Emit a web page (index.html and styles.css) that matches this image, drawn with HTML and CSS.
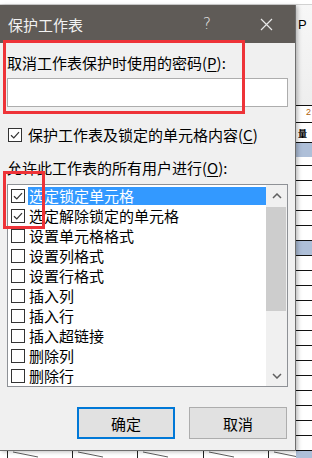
FILE: index.html
```html
<!DOCTYPE html>
<html lang="zh-CN">
<head>
    <meta charset="UTF-8">
    <title>保护工作表</title>
    <link rel="stylesheet" href="styles.css">
</head>
<body>
    <div class="screen">
        <div class="topline"></div>

        <!-- planilha atras do dialogo -->
        <div class="sheet">
            <div class="sheet-top"></div>
            <div class="colhead">P</div>
            <div class="srow r17"><span class="num">2</span></div>
            <div class="srow r20"><b class="glyph">量</b></div>
            <div class="srow sel"></div>
            <div class="srow r8"></div>
            <div class="srow"></div>
            <div class="srow"></div>
            <div class="srow"></div>
            <div class="srow"></div>
            <div class="srow"></div>
            <div class="srow sel"></div>
            <div class="srow"></div>
            <div class="srow"></div>
            <div class="srow"></div>
            <div class="srow"></div>
            <div class="srow"></div>
            <div class="srow"></div>
            <div class="srow"></div>
            <div class="srow"></div>
            <div class="srow"></div>
            <div class="srow"></div>
            <div class="srow"></div>
            <div class="srow"></div>
            <div class="srow"></div>
            <div class="srow sel"></div>
            <div class="srow"></div>
        </div>

        <div class="dialog">
            <div class="titlebar">
                <span class="title">保护工作表</span>
                <span class="help">?</span>
                <svg class="close" width="13" height="13" viewBox="0 0 13 13">
                    <path d="M1 1 L12 12 M12 1 L1 12" stroke="#e8e8e8" stroke-width="1.2" fill="none"/>
                </svg>
            </div>
            <div class="body">
                <div class="label">取消工作表保护时使用的密码(<u>P</u>):</div>
                <div class="pwd"></div>

                <div class="chkrow">
                    <span class="box">
                        <svg width="12" height="12" viewBox="0 0 12 12"><path d="M2 6.3 L4.8 9 L10 3.2" stroke="#333" stroke-width="1.2" fill="none"/></svg>
                    </span>
                    <span>保护工作表及锁定的单元格内容(<u>C</u>)</span>
                </div>

                <div class="label allow">允许此工作表的所有用户进行(<u>O</u>):</div>

                <div class="list">
                    <div class="items">
                        <div class="item">
                            <span class="box"><svg width="12" height="12" viewBox="0 0 12 12"><path d="M2 6.3 L4.8 9 L10 3.2" stroke="#333" stroke-width="1.2" fill="none"/></svg></span>
                            <span class="text active">选定锁定单元格</span>
                        </div>
                        <div class="item">
                            <span class="box"><svg width="12" height="12" viewBox="0 0 12 12"><path d="M2 6.3 L4.8 9 L10 3.2" stroke="#333" stroke-width="1.2" fill="none"/></svg></span>
                            <span class="text">选定解除锁定的单元格</span>
                        </div>
                        <div class="item"><span class="box"></span><span class="text">设置单元格格式</span></div>
                        <div class="item"><span class="box"></span><span class="text">设置列格式</span></div>
                        <div class="item"><span class="box"></span><span class="text">设置行格式</span></div>
                        <div class="item"><span class="box"></span><span class="text">插入列</span></div>
                        <div class="item"><span class="box"></span><span class="text">插入行</span></div>
                        <div class="item"><span class="box"></span><span class="text">插入超链接</span></div>
                        <div class="item"><span class="box"></span><span class="text">删除列</span></div>
                        <div class="item"><span class="box"></span><span class="text">删除行</span></div>
                    </div>
                    <div class="sbar">
                        <div class="arrow">
                            <svg width="10" height="6" viewBox="0 0 10 6"><path d="M1 5 L5 1 L9 5" stroke="#606060" stroke-width="1.5" fill="none"/></svg>
                        </div>
                        <div class="thumb"></div>
                        <div class="arrow down">
                            <svg width="10" height="6" viewBox="0 0 10 6"><path d="M1 1 L5 5 L9 1" stroke="#606060" stroke-width="1.5" fill="none"/></svg>
                        </div>
                    </div>
                </div>

                <div class="buttons">
                    <div class="btn primary">确定</div>
                    <div class="btn">取消</div>
                </div>
            </div>
        </div>

        <div class="below">
            <svg width="296" height="7" viewBox="0 0 296 7">
                <path d="M7.5 0 V7 M72.5 0 V7 M137.5 0 V7 M203.5 0 V7 M268.5 0 V7" stroke="#222" stroke-width="1"/>
                <path d="M13 1 L38 6 M78 1 L103 6 M143 1 L168 6 M209 1 L234 6 M274 1 L296 5.5" stroke="#333" stroke-width="0.8"/>
            </svg>
        </div>

        <!-- marcacoes vermelhas -->
        <div class="mark mark-pwd"></div>
        <div class="mark mark-chk"></div>
    </div>
</body>
</html>
```

FILE: styles.css
```css
body {
    margin: 0;
    background-color: #fff;
    font-family: "Noto Sans CJK SC", sans-serif;
    font-size: 15px;
    color: #000;
}

.screen {
    position: relative;
    width: 312px;
    height: 458px;
    overflow: hidden;
    display: grid;
    grid-template-columns: 296px 16px;
    grid-template-rows: 5px 446px 7px;
}

.topline {
    grid-column: 1;
    grid-row: 1;
    background-color: #fff;
    border-bottom: 1px solid #d2d2d2;
}

/* planilha */
.sheet {
    grid-column: 2;
    grid-row: 1 / 4;
    display: flex;
    flex-direction: column;
    background-color: #fff;
}

.sheet-top {
    height: 4px;
    flex: none;
    border-bottom: 1px solid #d2d2d2;
}

.colhead {
    height: 100px;
    flex: none;
    background: linear-gradient(#f7f7f7, #eeeeee);
    font-family: "Liberation Sans", sans-serif;
    font-size: 13px;
    line-height: 15px;
    padding: 12px 0 0 2px;
    box-sizing: border-box;
}

.srow {
    height: 15px;
    flex: none;
    border-top: 1px solid #111;
    box-sizing: border-box;
    overflow: hidden;
    position: relative;
}

.srow.r17 { height: 17px; }
.srow.r20 { height: 20px; }
.srow.r8 { height: 8px; border-top: none; }

.srow.sel {
    background-color: #aebfd8;
}

.num {
    display: block;
    text-align: right;
    font-family: "Liberation Sans", sans-serif;
    font-size: 9px;
    line-height: 12px;
    color: #b0600a;
    padding-right: 1px;
}

.glyph {
    display: block;
    font-size: 9px;
    line-height: 12px;
    padding: 5px 0 0 2px;
}

/* dialogo */
.dialog {
    grid-column: 1;
    grid-row: 2;
    background-color: #f0f0f0;
    border-right: 1px solid #6e6e6e;
    border-bottom: 1px solid #6e6e6e;
    box-shadow: 2px 1px 4px rgba(0, 0, 0, 0.25);
    display: flex;
    flex-direction: column;
    z-index: 1;
}

.titlebar {
    height: 38px;
    flex: none;
    background-color: #5f5b57;
    color: #f2f2f2;
    display: flex;
    align-items: center;
    padding-left: 8px;
}

.title {
    flex: 1;
    font-size: 15px;
}

.help {
    font-family: "DejaVu Sans", sans-serif;
    font-size: 15px;
    font-weight: 300;
    width: 12px;
    margin-right: 45px;
    color: #e8e8e8;
}

.close {
    margin-right: 22px;
}

.body {
    flex: 1;
    padding: 10px 7px 0 7px;
}

.label {
    line-height: 20px;
}

.label u, .chkrow u {
    text-decoration: underline;
    text-underline-offset: 2px;
}

.pwd {
    margin-top: 5px;
    height: 29px;
    box-sizing: border-box;
    background-color: #fff;
    border: 1px solid #adadad;
}

.chkrow {
    margin-top: 18px;
    display: flex;
    align-items: center;
    gap: 6px;
    line-height: 20px;
    padding-left: 1px;
}

.box {
    width: 14px;
    height: 14px;
    box-sizing: border-box;
    border: 1px solid #333;
    background-color: #fff;
    display: flex;
    align-items: center;
    justify-content: center;
    flex: none;
}

.allow {
    margin-top: 13px;
}

.list {
    margin-top: 6px;
    height: 203px;
    box-sizing: border-box;
    border: 1px solid #8e9196;
    background-color: #fff;
    display: flex;
}

.items {
    flex: 1;
    padding: 1px 0 0 3px;
}

.item {
    height: 20px;
    display: flex;
    align-items: center;
}

.item .text {
    flex: 1;
    margin-left: 3px;
    padding-left: 1px;
    line-height: 18px;
}

.item .text.active {
    background-color: #3399ff;
    color: #fff;
}

.sbar {
    width: 21px;
    background-color: #f0f0f0;
    display: flex;
    flex-direction: column;
}

.arrow {
    height: 21px;
    display: flex;
    align-items: center;
    justify-content: center;
}

.thumb {
    margin: 1px 1px 0 0;
    height: 104px;
    background-color: #cdcdcd;
}

.arrow.down {
    margin-top: auto;
}

.buttons {
    margin-top: 20px;
    display: flex;
    justify-content: flex-end;
    gap: 14px;
    padding-right: 1px;
}

.btn {
    width: 98px;
    height: 32px;
    box-sizing: border-box;
    border: 1px solid #adadad;
    background-color: #e1e1e1;
    display: flex;
    align-items: center;
    justify-content: center;
}

.btn.primary {
    border: 2px solid #0078d7;
}

.below {
    grid-column: 1;
    grid-row: 3;
    background-color: #fff;
}

.below svg {
    display: block;
}

/* marcacoes vermelhas por cima */
.mark {
    position: absolute;
    border: 3px solid #ee3338;
    box-sizing: border-box;
    z-index: 2;
}

.mark-pwd {
    left: 3px;
    top: 40px;
    width: 242px;
    height: 74px;
}

.mark-chk {
    left: 3px;
    top: 171px;
    width: 42px;
    height: 58px;
}
```
